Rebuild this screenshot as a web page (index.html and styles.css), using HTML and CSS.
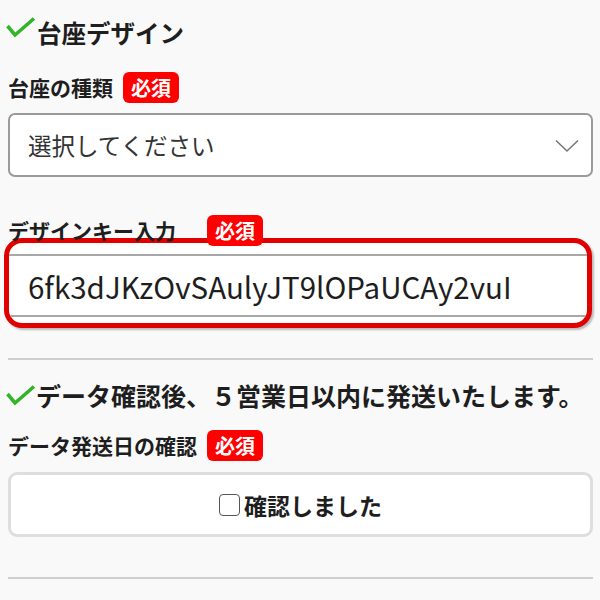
FILE: index.html
```html
<!DOCTYPE html>
<html lang="ja">
<head>
<meta charset="utf-8">
<link rel="stylesheet" href="styles.css">
</head>
<body>
<div class="page">
  <h2 class="sec-title first-title"><svg class="check" viewBox="0 0 30 22" width="30" height="22"><polyline points="1.5,9 9,18 28,1.5" fill="none" stroke="#35b32a" stroke-width="3.6"/></svg>台座デザイン</h2>

  <div class="label-row first"><span class="label">台座の種類</span><span class="badge">必須</span></div>
  <div class="select"><span class="placeholder">選択してください</span><svg class="chev" viewBox="0 0 24 14" width="24" height="14"><polyline points="1,1.5 12,12 23,1.5" fill="none" stroke="#777" stroke-width="1.6"/></svg></div>

  <div class="label-row second"><span class="label">デザインキー入力　</span><span class="badge">必須</span></div>
  <div class="key-wrap"><div class="key-input">6fk3dJKzOvSAulyJT9lOPaUCAy2vuI</div></div>

  <hr class="divider">

  <h2 class="sec-title second-title"><svg class="check" viewBox="0 0 30 22" width="30" height="22"><polyline points="1.5,9 9,18 28,1.5" fill="none" stroke="#35b32a" stroke-width="3.6"/></svg>データ確認後、５営業日以内に発送いたします。</h2>

  <div class="label-row third"><span class="label">データ発送日の確認</span><span class="badge">必須</span></div>
  <div class="confirm"><span class="box"></span><span class="confirm-text">確認しました</span></div>

  <hr class="divider last">
</div>
</body>
</html>
```

FILE: styles.css
```css
html, body {
  margin: 0;
  padding: 0;
  background: #f9f9f9;
}
body {
  font-family: "Noto Sans CJK JP", "Noto Sans", sans-serif;
  color: #1e1e1e;
}
.page {
  padding: 0 7px 0 8px;
}
.sec-title {
  margin: 0;
  height: 40px;
  display: flex;
  align-items: center;
  font-weight: 700;
  line-height: 40px;
  white-space: nowrap;
}
.check {
  display: block;
  flex: none;
  margin-left: -2px;
  margin-right: 1px;
  align-self: flex-start;
}
.first-title {
  padding-top: 13px;
  font-size: 24.5px;
}
.first-title .check { margin-top: 4px; }
.second-title {
  padding-top: 15px;
  font-size: 25px;
}
.second-title .check { margin-top: 10px; margin-right: 0; }
.label-row {
  display: flex;
  align-items: center;
  height: 31px;
}
.label-row.first { margin-top: 19px; }
.label-row.second { margin-top: 38px; position: relative; z-index: 1; }
.label-row.third { margin-top: 15px; }
.label {
  font-size: 21px;
  font-weight: 700;
  line-height: 31px;
}
.badge {
  margin-left: 10px;
  background: #ff0000;
  color: #fff;
  font-size: 20px;
  font-weight: 700;
  line-height: 31px;
  height: 31px;
  padding: 0 8px;
  border-radius: 6px;
}
.select {
  margin-top: 10px;
  height: 64px;
  box-sizing: border-box;
  border: 2px solid #9a9a9a;
  border-radius: 7px;
  background: #fff;
  display: flex;
  align-items: center;
  justify-content: space-between;
  padding: 0 12px 0 18px;
}
.placeholder {
  font-size: 23.5px;
  color: #333;
}
.chev { display: block; margin-top: 2px; }
.key-wrap {
  margin: -8px 1px 0 -4px;
  border: 5px solid #e00000;
  border-radius: 18px;
  background: #fff;
  overflow: hidden;
  padding: 11px 0 6px;
  box-shadow: 2px 2px 2px rgba(0,0,0,0.25);
}
.key-input {
  height: 59px;
  border-top: 2px solid #a8a8a8;
  border-bottom: 2px solid #a8a8a8;
  padding-left: 19px;
  display: flex;
  align-items: center;
  font-size: 29.5px;
  color: #1e1e1e;
}
.divider {
  margin: 30px 0 0;
  border: 0;
  border-top: 2px solid #cfcfcf;
  height: 0;
}
.divider.last { margin-top: 40px; }
.confirm {
  margin-top: 11px;
  height: 65px;
  box-sizing: border-box;
  border: 3px solid #dedede;
  border-radius: 9px;
  background: #fff;
  display: flex;
  align-items: center;
  justify-content: center;
  gap: 4px;
}
.box {
  width: 19px;
  height: 20px;
  border: 1.5px solid #555;
  border-radius: 4px;
  background: #fff;
}
.confirm-text {
  font-size: 23px;
  font-weight: 700;
}
```
